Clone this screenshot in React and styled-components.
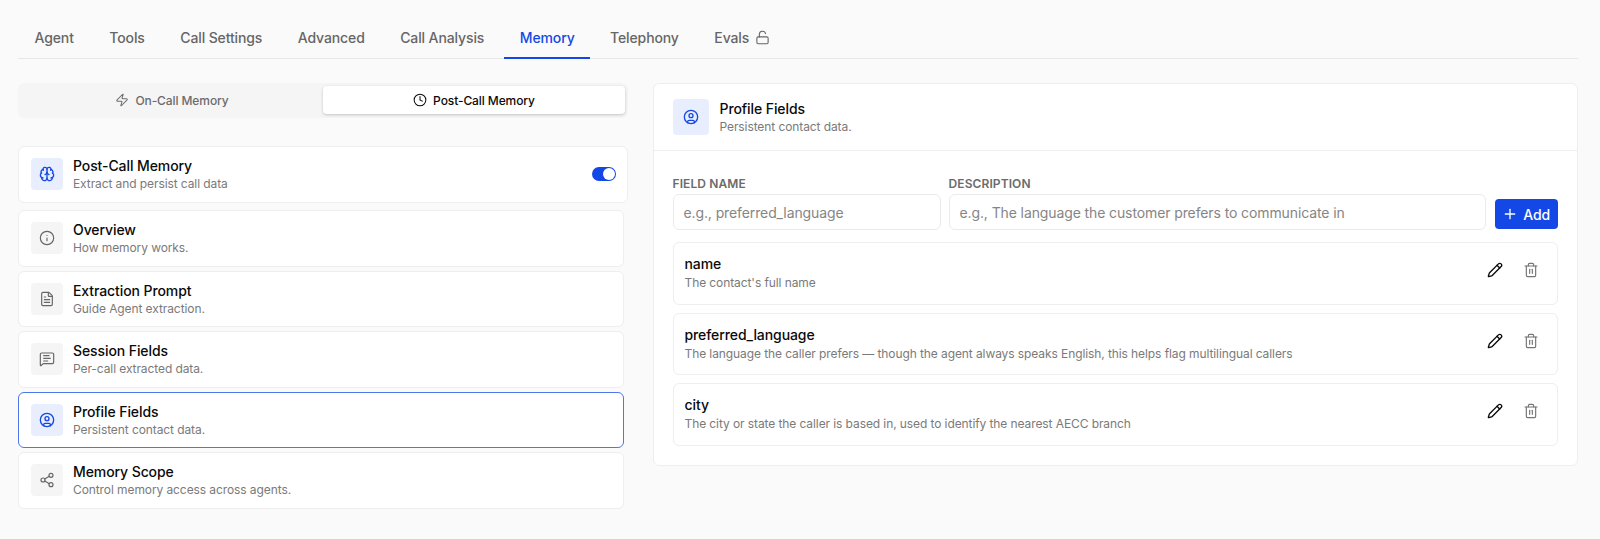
import React from 'react';
import styled, { createGlobalStyle } from 'styled-components';
import {
	Brain,
	CircleUser,
	Clock,
	FileText,
	Info,
	LockOpen,
	MessageSquareText,
	Pencil,
	Plus,
	Share2,
	Trash2,
	Zap,
} from 'lucide-react';

const BLUE = '#1448e6';

const GlobalStyle = createGlobalStyle`
	* {
		box-sizing: border-box;
	}
	body {
		margin: 0;
		background: #fafafa;
		font-family: Inter, 'Liberation Sans', sans-serif;
		letter-spacing: -0.09px;
		color: #0a0a0a;
	}
`;

const tabs = ['Agent', 'Tools', 'Call Settings', 'Advanced', 'Call Analysis', 'Memory', 'Telephony', 'Evals'];

const sections = [
	{ title: 'Overview', desc: 'How memory works.', Icon: Info },
	{ title: 'Extraction Prompt', desc: 'Guide Agent extraction.', Icon: FileText },
	{ title: 'Session Fields', desc: 'Per-call extracted data.', Icon: MessageSquareText },
	{ title: 'Profile Fields', desc: 'Persistent contact data.', Icon: CircleUser, active: true },
	{ title: 'Memory Scope', desc: 'Control memory access across agents.', Icon: Share2 },
];

const fields = [
	{ name: 'name', desc: "The contact's full name" },
	{
		name: 'preferred_language',
		desc: 'The language the caller prefers — though the agent always speaks English, this helps flag multilingual callers',
	},
	{
		name: 'city',
		desc: 'The city or state the caller is based in, used to identify the nearest AECC branch',
	},
];

const App = () => {
	return (
		<Page>
			<GlobalStyle />
			<TabBar>
				{tabs.map((tab) => (
					<Tab key={tab} $active={tab === 'Memory'}>
						{tab}
						{tab === 'Evals' && <LockOpen size={15} strokeWidth={1.75} />}
					</Tab>
				))}
			</TabBar>
			<Columns>
				<div>
					<Segment>
						<SegmentButton>
							<Zap size={14} strokeWidth={1.75} />
							On-Call Memory
						</SegmentButton>
						<SegmentButton $active>
							<Clock size={14} strokeWidth={1.75} />
							Post-Call Memory
						</SegmentButton>
					</Segment>
					<MasterCard>
						<IconBox $blue>
							<Brain size={16} strokeWidth={2} />
						</IconBox>
						<CardText>
							<Title>Post-Call Memory</Title>
							<Desc>Extract and persist call data</Desc>
						</CardText>
						<Toggle />
					</MasterCard>
					<SectionList>
						{sections.map(({ title, desc, Icon, active }) => (
							<SectionCard key={title} $active={active}>
								<IconBox $blue={active}>
									<Icon size={16} strokeWidth={active ? 2 : 1.75} />
								</IconBox>
								<CardText>
									<Title>{title}</Title>
									<Desc>{desc}</Desc>
								</CardText>
							</SectionCard>
						))}
					</SectionList>
				</div>
				<Panel>
					<PanelHeader>
						<IconBox $blue $large>
							<CircleUser size={16} strokeWidth={2} />
						</IconBox>
						<CardText>
							<Title>Profile Fields</Title>
							<Desc>Persistent contact data.</Desc>
						</CardText>
					</PanelHeader>
					<PanelBody>
						<FieldForm>
							<FormGroup>
								<Label>Field name</Label>
								<Input placeholder='e.g., preferred_language' />
							</FormGroup>
							<FormGroup>
								<Label>Description</Label>
								<Input placeholder='e.g., The language the customer prefers to communicate in' />
							</FormGroup>
							<AddButton>
								<Plus size={16} strokeWidth={2} />
								Add
							</AddButton>
						</FieldForm>
						{fields.map((field) => (
							<FieldRow key={field.name}>
								<FieldText>
									<FieldName>{field.name}</FieldName>
									<FieldDesc>{field.desc}</FieldDesc>
								</FieldText>
								<RowActions>
									<IconButton>
										<Pencil size={16} strokeWidth={2} />
									</IconButton>
									<IconButton $muted>
										<Trash2 size={16} strokeWidth={1.75} />
									</IconButton>
								</RowActions>
							</FieldRow>
						))}
					</PanelBody>
				</Panel>
			</Columns>
		</Page>
	);
};

const Page = styled.div`
	padding: 18px 22px 0 18px;
	min-height: 539px;
`;

const TabBar = styled.div`
	display: flex;
	gap: 4.5px;
	padding-left: 1px;
	border-bottom: 1px solid #e8e8e8;
	height: 41px;
`;

const Tab = styled.div`
	display: flex;
	align-items: center;
	gap: 6px;
	height: 41px;
	padding: 0 15.5px;
	font-size: 14px;
	font-weight: 500;
	letter-spacing: -0.12px;
	color: ${({ $active }) => ($active ? BLUE : '#666')};
	border-bottom: 2px solid ${({ $active }) => ($active ? BLUE : 'transparent')};
`;

const Columns = styled.div`
	display: grid;
	grid-template-columns: 610px 925.5px;
	column-gap: 24.5px;
	margin-top: 24px;
	align-items: start;
`;

const Segment = styled.div`
	display: grid;
	grid-template-columns: 1fr 1fr;
	padding: 3px 3px 4px;
	height: 35px;
	background: #f5f5f5;
	border-radius: 6px;
`;

const SegmentButton = styled.div`
	display: flex;
	align-items: center;
	justify-content: center;
	gap: 6px;
	font-size: 12px;
	font-weight: 500;
	border-radius: 4px;
	color: ${({ $active }) => ($active ? '#0a0a0a' : '#6b6b6b')};
	background: ${({ $active }) => ($active ? '#fff' : 'transparent')};
	box-shadow: ${({ $active }) => ($active ? '0 1px 3px rgba(0, 0, 0, 0.2)' : 'none')};
`;

const SectionCard = styled.div`
	display: flex;
	align-items: center;
	gap: 10px;
	height: 56.5px;
	padding: 0 12px;
	background: #fff;
	border: 1px solid ${({ $active }) => ($active ? '#4d77ea' : '#eeeeee')};
	border-radius: 6px;
`;

const MasterCard = styled(SectionCard)`
	height: 57px;
	margin-top: 27.5px;
	padding-right: 11px;
`;

const SectionList = styled.div`
	display: flex;
	flex-direction: column;
	gap: 4px;
	margin-top: 7.5px;
	padding-right: 4px;
`;

const IconBox = styled.div`
	display: flex;
	align-items: center;
	justify-content: center;
	flex-shrink: 0;
	width: ${({ $large }) => ($large ? '36px' : '32px')};
	height: ${({ $large }) => ($large ? '36px' : '32px')};
	border-radius: 4px;
	color: ${({ $blue }) => ($blue ? BLUE : '#666')};
	background: ${({ $blue }) => ($blue ? '#e8eefd' : '#f5f5f5')};
`;

const CardText = styled.div`
	flex: 1;
	min-width: 0;
	padding-top: 2px;
`;

const Title = styled.div`
	font-size: 14px;
	font-weight: 500;
	line-height: 18px;
`;

const Desc = styled.div`
	font-size: 12px;
	line-height: 18px;
	color: #7a7a7a;
`;

const Toggle = styled.div`
	position: relative;
	width: 24px;
	height: 14px;
	border-radius: 7px;
	background: ${BLUE};
	&::after {
		content: '';
		position: absolute;
		top: 1px;
		right: 1px;
		width: 12px;
		height: 12px;
		border-radius: 50%;
		background: #fff;
	}
`;

const Panel = styled.div`
	background: #fff;
	border: 1px solid #eeeeee;
	border-radius: 6px;
`;

const PanelHeader = styled.div`
	display: flex;
	align-items: center;
	gap: 11px;
	height: 67px;
	padding: 0 19px;
	border-bottom: 1px solid #eeeeee;
`;

const PanelBody = styled.div`
	display: flex;
	flex-direction: column;
	gap: 8px;
	padding: 26px 19px 19px;
`;

const FieldForm = styled.div`
	display: grid;
	grid-template-columns: 268px 537px 1fr;
	column-gap: 8px;
	align-items: end;
	margin-bottom: 4px;
`;

const FormGroup = styled.div`
	display: flex;
	flex-direction: column;
	gap: 3px;
`;

const Label = styled.label`
	font-size: 12px;
	font-weight: 600;
	line-height: 14px;
	letter-spacing: 0.1px;
	text-transform: uppercase;
	color: #6b6b6b;
`;

const Input = styled.input`
	height: 36px;
	padding: 0 10px;
	font-family: inherit;
	font-size: 14px;
	letter-spacing: -0.11px;
	background: #fff;
	border: 1px solid #ebebeb;
	border-radius: 6px;
	&::placeholder {
		color: #858585;
	}
`;

const AddButton = styled.div`
	display: flex;
	align-items: center;
	justify-content: center;
	gap: 5px;
	height: 30px;
	margin-left: 1px;
	margin-bottom: 1px;
	font-size: 14px;
	font-weight: 500;
	color: #fff;
	background: ${BLUE};
	border-radius: 4px;
`;

const FieldRow = styled.div`
	display: flex;
	align-items: flex-start;
	height: 62.5px;
	padding: 11px 10px 0 11px;
	border: 1px solid #eeeeee;
	border-radius: 6px;
`;

const FieldText = styled.div`
	flex: 1;
	min-width: 0;
`;

const FieldName = styled.div`
	font-size: 14px;
	font-weight: 500;
	line-height: 20px;
`;

const FieldDesc = styled.div`
	font-size: 12px;
	line-height: 18px;
	color: #7a7a7a;
`;

const RowActions = styled.div`
	display: flex;
	gap: 4px;
`;

const IconButton = styled.div`
	display: flex;
	align-items: center;
	justify-content: center;
	width: 32px;
	height: 32px;
	color: ${({ $muted }) => ($muted ? '#757575' : '#0a0a0a')};
`;

export default App;
